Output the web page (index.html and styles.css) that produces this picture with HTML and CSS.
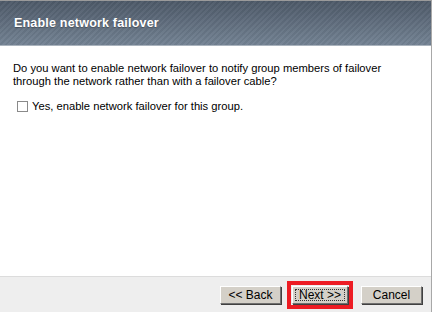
FILE: index.html
```html
<!DOCTYPE html>
<html lang="en">
<head>
    <meta charset="UTF-8">
    <title>Enable network failover</title>
    <link rel="stylesheet" href="styles.css">
</head>
<body>
    <div class="dialog">
        <div class="header">
            <h1>Enable network failover</h1>
        </div>
        <div class="content">
            <p>Do you want to enable network failover to notify group members of failover through the network rather than with a failover cable?</p>
            <label class="option">
                <input type="checkbox">
                <span>Yes, enable network failover for this group.</span>
            </label>
        </div>
        <div class="footer">
            <button class="btn">&lt;&lt; Back</button>
            <div class="highlight">
                <button class="btn focused">Next &gt;&gt;</button>
            </div>
            <button class="btn">Cancel</button>
        </div>
    </div>
</body>
</html>
```

FILE: styles.css
```css
body {
    margin: 0;
    background: #ffffff;
    font-family: "Liberation Sans", Arial, sans-serif;
    font-size: 11.2px;
    color: #000000;
}
.dialog {
    width: 431px;
    height: 311px;
    border-top: 1px solid #9a9a9a;
    border-right: 1px solid #a8a8a8;
    display: flex;
    flex-direction: column;
}
.header {
    height: 44px;
    border-bottom: 1px solid #aab3bd;
    background:
        repeating-linear-gradient(135deg, rgba(255, 255, 255, 0.035) 0 2px, rgba(0, 0, 0, 0.035) 2px 4px),
        linear-gradient(#4d5968, #738293);
    display: flex;
    align-items: center;
    padding-left: 14px;
}
.header h1 {
    margin: 0;
    color: #ffffff;
    font-size: 12.5px;
    font-weight: bold;
    letter-spacing: 0.2px;
    text-shadow: 0 1px 1px rgba(0, 0, 0, 0.3);
}
.content {
    flex: 1;
    padding: 16px 13px 0 13px;
}
.content p {
    margin: 0;
    line-height: 13px;
}
.option {
    display: flex;
    align-items: center;
    margin-top: 12px;
    margin-left: 4px;
}
.option input {
    margin: 0 4px 0 0;
    width: 11px;
    height: 11px;
    appearance: none;
    border: 1px solid #8a8a8a;
    background: #ffffff;
}
.footer {
    height: 35px;
    border-top: 1px solid #dcdcdc;
    background: #eeeeee;
    display: flex;
    align-items: center;
    justify-content: flex-end;
    padding-right: 9px;
}
.btn {
    width: 61px;
    height: 18px;
    padding: 0;
    font-family: "Liberation Sans", Arial, sans-serif;
    font-size: 12px;
    color: #000000;
    background: #d4d0c8;
    border: 1px solid;
    border-color: #ffffff #6f6f6f #6f6f6f #ffffff;
    box-shadow: 1px 1px 0 #404040;
}
.highlight {
    border: 4px solid #ed1c24;
    padding: 1px;
    margin: 0 8px 0 6px;
    display: flex;
}
.focused {
    width: 56px;
    outline: 1px dotted #333333;
    outline-offset: -4px;
}
```
